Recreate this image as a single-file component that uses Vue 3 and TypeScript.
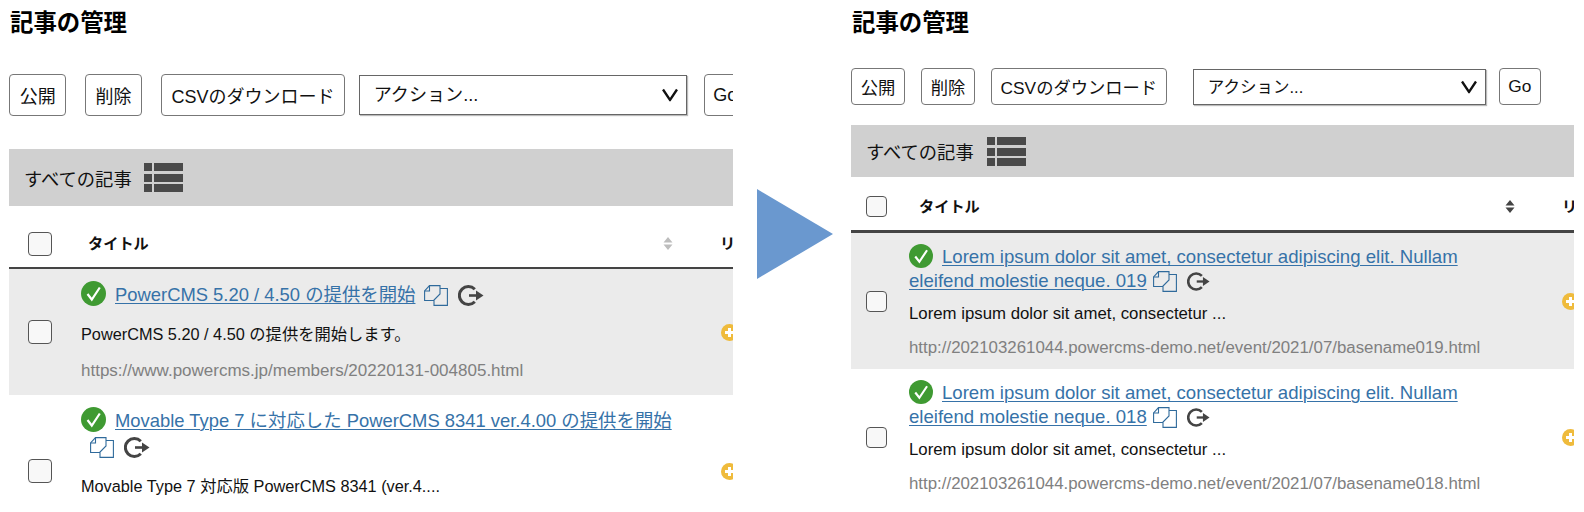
<script setup lang="ts">
interface Row {
  title: string
  desc: string
  url: string
}
interface Panel {
  key: string
  rows: Row[]
}
const lorem = 'Lorem ipsum dolor sit amet, consectetur adipiscing elit. Nullam eleifend molestie neque.'
const panels: Panel[] = [
  {
    key: 'before',
    rows: [
      {
        title: 'PowerCMS 5.20 / 4.50 の提供を開始',
        desc: 'PowerCMS 5.20 / 4.50 の提供を開始します。',
        url: 'https://www.powercms.jp/members/20220131-004805.html',
      },
      {
        title: 'Movable Type 7 に対応した PowerCMS 8341 ver.4.00 の提供を開始',
        desc: 'Movable Type 7 対応版 PowerCMS 8341 (ver.4....',
        url: '\u00a0',
      },
    ],
  },
  {
    key: 'after',
    rows: [
      {
        title: `${lorem} 019`,
        desc: 'Lorem ipsum dolor sit amet, consectetur ...',
        url: 'http://202103261044.powercms-demo.net/event/2021/07/basename019.html',
      },
      {
        title: `${lorem} 018`,
        desc: 'Lorem ipsum dolor sit amet, consectetur ...',
        url: 'http://202103261044.powercms-demo.net/event/2021/07/basename018.html',
      },
    ],
  },
]
const actions = ['公開', '削除', 'CSVのダウンロード']
</script>

<template>
  <div class="page">
    <template v-for="(panel, pi) in panels" :key="panel.key">
      <section class="panel" :class="panel.key">
        <h1 class="heading">記事の管理</h1>
        <div class="toolbar">
          <button v-for="a in actions" :key="a" class="btn" type="button">{{ a }}</button>
          <div class="select-wrap">
            <select class="select"><option>アクション...</option></select>
            <svg class="chevron" viewBox="0 0 16 13"><path d="M1 1 8 11.500 15 1" fill="none" stroke="#111" stroke-width="2.300" /></svg>
          </div>
          <button class="btn go" type="button">Go</button>
        </div>
        <div class="bar">
          <span>すべての記事</span>
          <svg class="list-icon" viewBox="0 0 39 29" fill="#4a4a4a">
            <rect x="0" y="0" width="8" height="8" /><rect x="10" y="0" width="29" height="8" />
            <rect x="0" y="11" width="8" height="8" /><rect x="10" y="11" width="29" height="8" />
            <rect x="0" y="21" width="8" height="8" /><rect x="10" y="21" width="29" height="8" />
          </svg>
        </div>
        <div class="grid head">
          <div class="check-cell"><input class="check" type="checkbox" aria-label="すべて選択" /></div>
          <div class="head-title">
            <span>タイトル</span>
            <svg class="sort" viewBox="0 0 10 13"><path d="M5 0 9.500 5.500H.5ZM5 13 .5 7.500h9Z" /></svg>
          </div>
          <div class="head-next">リ</div>
        </div>
        <div v-for="(row, ri) in panel.rows" :key="ri" class="grid row" :class="{ odd: ri === 0 }">
          <div class="check-cell"><input class="check" type="checkbox" aria-label="選択" /></div>
          <div class="body">
            <div class="title-line">
              <svg class="ok" viewBox="0 0 25 25">
                <circle cx="12.500" cy="12.500" r="12.500" fill="#3f9a32" />
                <path d="M6.500 13 10.800 18.500 18.800 6.500" fill="none" stroke="#fff" stroke-width="2.200" />
              </svg>
              <a class="link" href="#">{{ row.title }}</a>
              <svg class="copy" viewBox="0 0 24 21" fill="none" stroke="#2f6a9b" stroke-width="1.100">
                <path d="M10 15.500H.6V6L5.500 .6H16V9L10 15V20.400H23.400V3.500H16" />
                <path d="M.6 6H5.500V.6" />
              </svg>
              <svg class="redo" viewBox="0 0 26 21" fill="none" stroke="#444">
                <path d="M16.800 4.200A9 9 0 1 0 16.800 16.800" stroke-width="3" />
                <path d="M11 10.500H20" stroke-width="2.600" />
                <path d="M18 5.500 25.500 10.500 18 15.500Z" fill="#444" stroke="none" />
              </svg>
            </div>
            <p class="desc">{{ row.desc }}</p>
            <p class="url">{{ row.url }}</p>
          </div>
          <div class="plus-cell">
            <svg class="plus" viewBox="0 0 17 17">
              <circle cx="8.500" cy="8.500" r="8.500" fill="#efbb3c" />
              <path d="M8.500 4v9M4 8.500h9" stroke="#fff" stroke-width="3" />
            </svg>
          </div>
        </div>
      </section>
      <div v-if="pi === 0" class="arrow" aria-hidden="true"></div>
    </template>
  </div>
</template>

<style>
html, body { margin: 0; background: #fff; }
</style>

<style scoped>
.page {
  display: flex;
  align-items: flex-start;
  height: 512px;
  overflow: hidden;
  padding-left: 9px;
  box-sizing: border-box;
  color: #111;
  font-family: "Liberation Sans", "Noto Sans CJK JP", sans-serif;
}
.panel {
  flex: none;
  height: 512px;
  overflow: hidden;
}
.before { width: 724px; }
.after { width: 723px; }
.arrow {
  flex: none;
  width: 76px;
  height: 90px;
  margin: 189px 18px 0 24px;
  background: #6a98cf;
  clip-path: polygon(0 0, 100% 50%, 0 100%);
}
.heading {
  margin: 0;
  font-size: 23.400px;
  font-weight: 700;
  line-height: 28px;
  padding-top: 9px;
  color: #000;
  padding-left: 1px;
}
.toolbar {
  display: flex;
  align-items: center;
}
.before .toolbar { margin-top: 37px; height: 42px; gap: 18.500px; }
.after .toolbar { margin-top: 31px; height: 37px; gap: 16px; }
.btn {
  flex: none;
  height: 100%;
  padding: 0;
  background: #fff;
  border: 1px solid #777;
  border-radius: 4px;
  color: #111;
  font-family: inherit;
}
.before .btn { font-size: 18px; padding: 0 9.700px; }
.after .btn { font-size: 17.300px; padding: 0 8.700px; }
.select-wrap {
  position: relative;
  flex: none;
}
.before .select-wrap { width: 328px; height: 40px; margin-left: -5px; }
.after .select-wrap { width: 293px; height: 36px; margin-left: 10px; }
.select {
  display: block;
  width: 100%;
  height: 100%;
  box-sizing: border-box;
  appearance: none;
  background: #fff;
  border: 1px solid #666;
  border-radius: 0;
  box-shadow: 1px 1px 1px #bbb;
  color: #111;
  font-family: inherit;
  padding: 0 14px;
}
.before .select { font-size: 18.100px; }
.after .select { font-size: 16.500px; }
.chevron {
  position: absolute;
  right: 9px;
  top: 50%;
  width: 16px;
  height: 13px;
  transform: translateY(-50%);
}
.before .go { width: 42px; margin-left: -1px; padding: 0 0 0 8px; text-align: left; }
.after .go { width: 42px; margin-left: -3px; padding: 0; }
.bar {
  display: flex;
  align-items: center;
  background: #d0d0d0;
  padding-left: 15px;
  font-size: 18.300px;
}
.before .bar { margin-top: 33px; height: 57px; gap: 12px; }
.after .bar { margin-top: 20px; height: 52px; gap: 13px; }
.list-icon {
  width: 39px;
  height: 29px;
}
.grid {
  display: grid;
  align-items: center;
  width: 760px;
}
.before .grid { grid-template-columns: 72px 639px 1fr; }
.after .grid { grid-template-columns: 58px 653px 1fr; }
.head {
  font-size: 15.200px;
  font-weight: 700;
  box-sizing: content-box;
}
.before .head { height: 47px; padding-top: 14px; border-bottom: 2px solid #444; }
.after .head { height: 47px; padding-top: 6px; border-bottom: 3px solid #444; }
.head-title {
  display: flex;
  align-items: center;
  justify-content: space-between;
  padding-right: 47px;
}
.head-title span, .head-next { margin-bottom: 4px; }
.before .head-title { padding-left: 7px; }
.after .head-title { padding-left: 10px; }
.sort { width: 10px; height: 13px; }
.before .sort { fill: #bdbdbd; }
.after .sort { fill: #444; }
.check-cell { display: flex; }
.before .check-cell { padding-left: 19px; }
.after .check-cell { padding-left: 15px; }
.check {
  appearance: none;
  flex: none;
  margin: 0;
  box-sizing: border-box;
  background: #f8f8f8;
  border: 1px solid #555;
  border-radius: 4px;
}
.before .check { width: 24px; height: 24px; }
.after .check { width: 21px; height: 21px; }
.odd { background: #ebebeb; }
.body { min-width: 0; }
.before .body { width: 605px; padding: 12px 0; }
.after .body { width: 610px; padding: 11px 0 9px; }
.before .title-line { font-size: 18.400px; line-height: 26px; }
.after .title-line { font-size: 18.600px; line-height: 23.500px; }
.link { color: #3672a8; text-decoration: underline; text-underline-offset: 2px; text-decoration-thickness: 1px; }
.ok {
  width: 25px;
  height: 25px;
  vertical-align: -5px;
  margin-right: 9px;
}
.after .ok { width: 24px; height: 24px; }
.copy {
  width: 24px;
  height: 21px;
  vertical-align: -5px;
  margin-left: 9px;
}
.after .copy { margin-left: 6px; }
.redo {
  width: 26px;
  height: 21px;
  vertical-align: -5px;
  margin-left: 10px;
}
.after .redo { width: 23px; }
.desc, .url { margin: 0; line-height: 24px; }
.desc { color: #111; }
.url { color: #808080; }
.before .desc { font-size: 16.300px; margin-top: 14px; }
.before .url { font-size: 17px; margin-top: 13px; }
.after .desc { font-size: 16.800px; margin-top: 10px; }
.after .url { font-size: 16.850px; margin-top: 10px; }
.plus-cell { display: flex; }
.plus { width: 17px; height: 17px; }
.before .plus-cell { padding-left: 1px; }
</style>
